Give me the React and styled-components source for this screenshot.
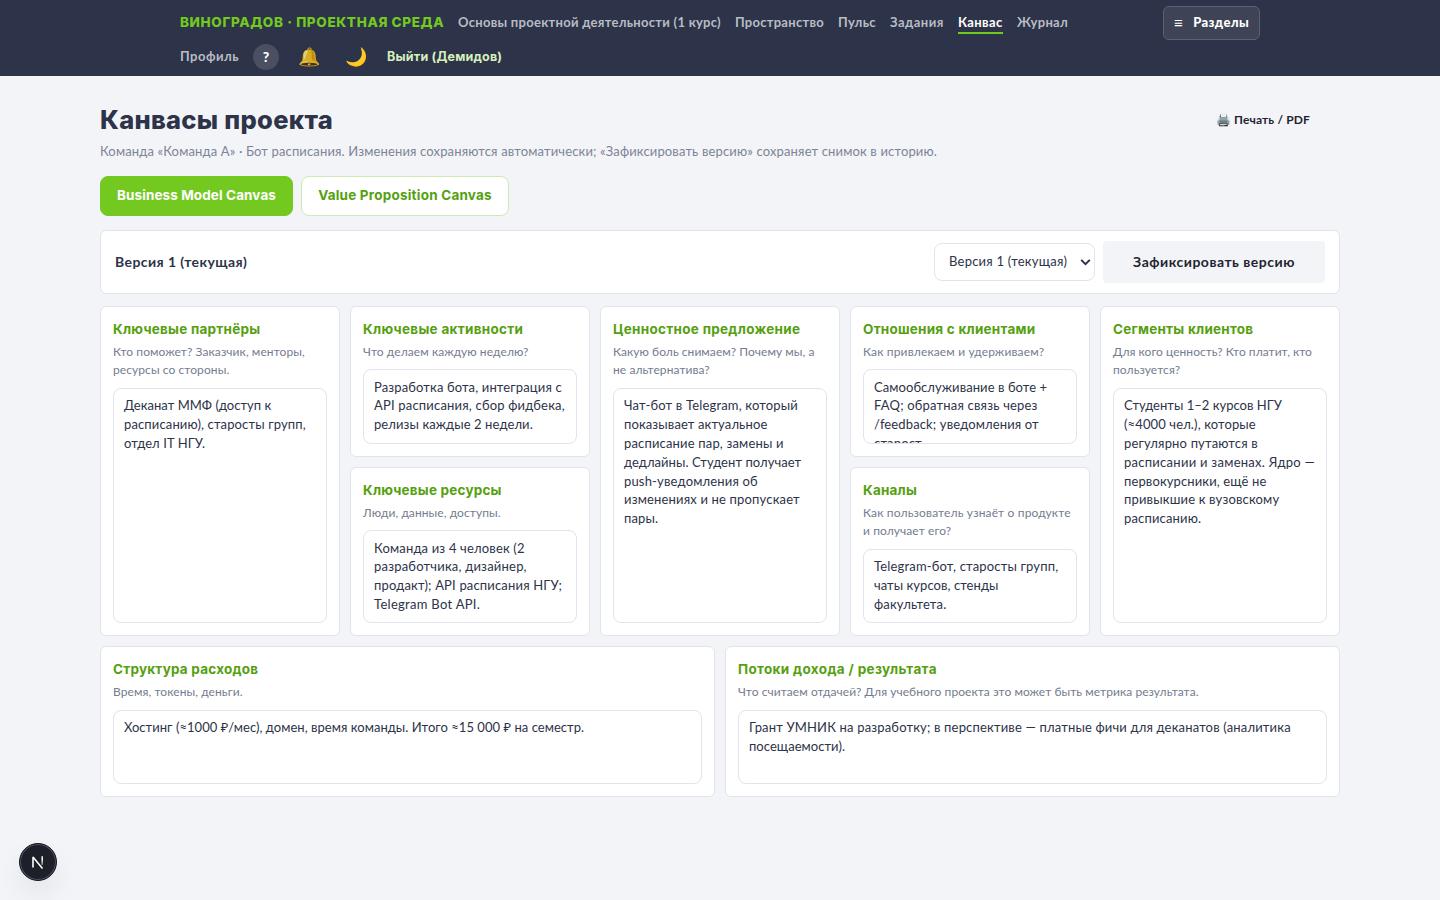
import React from "react";
import styled, { createGlobalStyle, css } from "styled-components";

const fonts = {
  body: '"Lato", "Noto Sans", sans-serif',
  display: '"Inter", "Roboto", sans-serif',
};

const GlobalStyle = createGlobalStyle`
  *, *::before, *::after { box-sizing: border-box; }
  body {
    margin: 0;
    min-height: 100vh;
    background: #f3f4f8;
    color: #2d3348;
    font-family: ${fonts.body};
    font-size: 14px;
    line-height: 1.55;
  }
  button { font: inherit; cursor: pointer; }
`;

const TopBar = styled.header`
  height: 76px;
  background: #2d3348;
  padding-top: 6px;
`;

const TopBarInner = styled.div`
  width: 1080px;
  margin: 0 auto;
  display: flex;
  justify-content: space-between;
  align-items: flex-start;
`;

const Nav = styled.nav`
  width: 960px;
  display: flex;
  flex-direction: column;
  gap: 4px;
`;

const NavRow = styled.div`
  height: ${(p) => p.$height}px;
  display: flex;
  align-items: center;
  gap: 14px;
  white-space: nowrap;
`;

const Brand = styled.a`
  width: 264px;
  padding-bottom: 2px;
  color: #73c91f;
  font: 800 13.5px/20px ${fonts.display};
  letter-spacing: ${(p) => p.$track}px;
`;

const NavLink = styled.a`
  color: ${(p) => (p.$active ? "#ffffff" : "#b9bcc5")};
  width: ${(p) => p.$width}px;
  font-size: 13px;
  font-weight: 700;
  line-height: 20px;
  letter-spacing: ${(p) => p.$track}px;
  border-bottom: 2px solid ${(p) => (p.$active ? "#73c91f" : "transparent")};
`;

const HelpButton = styled.button`
  width: 26px;
  height: 26px;
  padding: 0 0 1px;
  border: 0;
  border-radius: 50%;
  background: #4a4f62;
  color: #fff;
  font-size: 14px;
  font-weight: 900;
  line-height: 25px;
`;

const EmojiButton = styled.button`
  width: 33px;
  height: 26px;
  padding: 0 2px 2px 0;
  border: 0;
  background: none;
  display: flex;
  align-items: center;
  justify-content: center;
  font-size: 18px;
  line-height: 24px;
  filter: brightness(${(p) => p.$brightness || 1});
`;

const LogoutButton = styled.button`
  padding: 0;
  border: 0;
  background: none;
  color: #d5efbc;
  font: 700 12.5px/20px ${fonts.display};
  letter-spacing: ${(p) => p.$track}px;
`;

const SectionsButton = styled.button`
  width: 97px;
  height: 34px;
  padding: 0 10px 1px;
  display: flex;
  align-items: center;
  justify-content: space-between;
  border: 1px solid #5c6172;
  border-radius: 6px;
  background: #3e4356;
  color: #fff;
  font-size: 13px;
  font-weight: 900;
  letter-spacing: 0.35px;
`;

const MenuGlyph = styled.span`
  font: 700 15px/20px ${fonts.display};
  padding-top: 1px;
`;

const Page = styled.main`
  width: 1240px;
  margin: 0 auto;
  padding-top: 24px;
`;

const PageHead = styled.div`
  height: 41px;
  display: flex;
  align-items: center;
  justify-content: space-between;
`;

const Title = styled.h1`
  margin: 0;
  padding-bottom: 1px;
  font: 800 25.5px/40px ${fonts.display};
  letter-spacing: ${(p) => p.$track}px;
`;

const PlainButton = styled.button`
  height: 42px;
  padding: 0 30px;
  border: 0;
  border-radius: 4px;
  background: #f3f4f8;
  color: #1f2430;
  font-size: ${(p) => p.$size}px;
  font-weight: 700;
  white-space: nowrap;
  letter-spacing: ${(p) => p.$track}px;
  ${(p) => p.$width && css`width: ${p.$width}px; padding: 0; text-align: center;`}
`;

const Subtitle = styled.p`
  margin: 0;
  color: #7c8496;
  font-size: 13px;
  line-height: 20px;
  letter-spacing: 0.146px;
  white-space: nowrap;
`;

const Tabs = styled.div`
  margin-top: 15px;
  display: flex;
  gap: 8px;
`;

const Tab = styled.button`
  width: ${(p) => p.$width}px;
  height: 40px;
  padding: 0 0 2px;
  border: 1px solid ${(p) => (p.$active ? "#73c91f" : "#cdeab0")};
  border-radius: 8px;
  background: ${(p) => (p.$active ? "#73c91f" : "#ffffff")};
  color: ${(p) => (p.$active ? "#ffffff" : "#55a010")};
  font: 700 13.5px/20px ${fonts.display};
  letter-spacing: ${(p) => p.$track}px;
  white-space: nowrap;
`;

const panel = css`
  background: #fff;
  border: 1px solid #e1e4ec;
  border-radius: 6px;
`;

const VersionBar = styled.section`
  ${panel}
  height: 64px;
  margin-top: 14px;
  padding: 0 14px;
  display: flex;
  align-items: center;
  gap: 8px;
`;

const VersionName = styled.strong`
  flex: 1;
  padding-bottom: 1px;
  font-size: 14px;
  font-weight: 700;
  letter-spacing: 0.42px;
`;

const VersionSelect = styled.button`
  width: 161px;
  height: 38px;
  padding: 0 3px 1px 14px;
  display: flex;
  align-items: center;
  justify-content: space-between;
  border: 1px solid #e1e4ec;
  border-radius: 8px;
  background: #fff;
  color: #2d3348;
  font-size: 13px;
  letter-spacing: 0.23px;
  white-space: nowrap;
`;

const Grid = styled.div`
  margin-top: 12px;
  display: grid;
  grid-template-columns: repeat(10, 1fr);
  grid-template-rows: 151px 169.3px 150.7px;
  gap: 10px;
`;

const Card = styled.article`
  ${panel}
  grid-column: ${(p) => p.$column};
  grid-row: ${(p) => p.$row};
  min-width: 0;
  min-height: 0;
  padding: 12px;
  display: flex;
  flex-direction: column;
`;

const CardTitle = styled.h2`
  margin: 0 0 2px;
  color: #55a010;
  font: 700 13.5px/21.7px ${fonts.display};
  letter-spacing: ${(p) => p.$track}px;
  white-space: nowrap;
`;

const Hint = styled.p`
  margin: 0 0 8px;
  color: #747c8f;
  font-size: 12px;
  line-height: 18.6px;
  white-space: nowrap;
`;

const Field = styled.div`
  flex: 1;
  min-height: 0;
  padding: 7.3px 10px;
  overflow: hidden;
  border: 1px solid #e1e4ec;
  border-radius: 8px;
  background: #fff;
  font-size: 13px;
  line-height: 18.85px;
  white-space: nowrap;
`;

const Line = styled.span`
  display: block;
  letter-spacing: ${(p) => p.$track}px;
`;

const DevBadge = styled.div`
  position: fixed;
  left: 19px;
  bottom: 19px;
  width: 38px;
  height: 38px;
  display: grid;
  place-items: center;
  border-radius: 50%;
  background: #1d2029;
  border: 1px solid #16181f;
  box-shadow: inset 0 0 0 1px #4d5468, 0 14px 26px 2px rgba(0, 0, 0, 0.05);
`;

const navItems = [
  { label: "Основы проектной деятельности (1 курс)", width: 263, track: 0.28 },
  { label: "Пространство", width: 89, track: 0.27 },
  { label: "Пульс", width: 38, track: 0.38 },
  { label: "Задания", width: 54, track: 0.48 },
  { label: "Канвас", width: 45, track: 0.38, active: true },
  { label: "Журнал", width: 51, track: 0.32 },
];

const cards = [
  {
    title: "Ключевые партнёры", track: 0.24, column: "1 / 3", row: "1 / 3",
    hint: ["Кто поможет? Заказчик, менторы,", "ресурсы со стороны."],
    lines: [["Деканат ММФ (доступ к", 0.03], ["расписанию), старосты групп,", 0.14], ["отдел IT НГУ.", 0.08]],
  },
  {
    title: "Ключевые активности", track: 0.29, column: "3 / 5", row: "1",
    hint: ["Что делаем каждую неделю?"],
    lines: [["Разработка бота, интеграция с", 0.14], ["API расписания, сбор фидбека,", 0.19], ["релизы каждые 2 недели.", 0.09]],
  },
  {
    title: "Ключевые ресурсы", track: 0.2, column: "3 / 5", row: "2",
    hint: ["Люди, данные, доступы."],
    lines: ["Команда из 4 человек (2", ["разработчика, дизайнер,", 0.21], "продакт); API расписания НГУ;", ["Telegram Bot API.", 0.29]],
  },
  {
    title: "Ценностное предложение", track: 0.3, column: "5 / 7", row: "1 / 3",
    hint: [["Какую боль снимаем? Почему мы, а", 0.05], "не альтернатива?"],
    lines: [
      "Чат-бот в Telegram, который", ["показывает актуальное", 0.12], "расписание пар, замены и",
      ["дедлайны. Студент получает", 0.05], "push-уведомления об", "изменениях и не пропускает", "пары.",
    ],
  },
  {
    title: "Отношения с клиентами", track: 0.23, column: "7 / 9", row: "1",
    hint: [["Как привлекаем и удерживаем?", 0.15]],
    lines: [["Самообслуживание в боте +", 0.07], ["FAQ; обратная связь через", 0.19], ["/feedback; уведомления от", 0.13], "старост."],
  },
  {
    title: "Каналы", track: 0.2, column: "7 / 9", row: "2",
    hint: [["Как пользователь узнаёт о продукте", 0.15], "и получает его?"],
    lines: ["Telegram-бот, старосты групп,", ["чаты курсов, стенды", 0.06], "факультета."],
  },
  {
    title: "Сегменты клиентов", track: 0.24, column: "9 / 11", row: "1 / 3",
    hint: [["Для кого ценность? Кто платит, кто", 0.03], "пользуется?"],
    lines: [
      ["Студенты 1–2 курсов НГУ", 0.02], ["(≈4000 чел.), которые", 0.12], "регулярно путаются в",
      ["расписании и заменах. Ядро —", 0.27], ["первокурсники, ещё не", 0.12], "привыкшие к вузовскому", "расписанию.",
    ],
  },
  {
    title: "Структура расходов", track: 0.22, column: "1 / 6", row: "3",
    hint: ["Время, токены, деньги."],
    lines: [["Хостинг (≈1000 ₽/мес), домен, время команды. Итого ≈15 000 ₽ на семестр.", 0.04]],
  },
  {
    title: "Потоки дохода / результата", track: 0.35, column: "6 / 11", row: "3",
    hint: [["Что считаем отдачей? Для учебного проекта это может быть метрика результата.", 0.06]],
    lines: ["Грант УМНИК на разработку; в перспективе — платные фичи для деканатов (аналитика", ["посещаемости).", 0.05]],
  },
];

function Lines({ items, track }) {
  return items.map((item) => {
    const [text, own] = Array.isArray(item) ? item : [item, track];
    return <Line key={text} $track={own}>{text}</Line>;
  });
}

export default function App() {
  return (
    <>
      <GlobalStyle />
      <TopBar>
        <TopBarInner>
          <Nav>
            <NavRow $height={34}>
              <Brand $track={0.64}>ВИНОГРАДОВ · ПРОЕКТНАЯ СРЕДА</Brand>
              {navItems.map((item) => (
                <NavLink key={item.label} $width={item.width} $track={item.track} $active={item.active}>
                  {item.label}
                </NavLink>
              ))}
            </NavRow>
            <NavRow $height={26}>
              <NavLink $width={59} $track={0.5}>Профиль</NavLink>
              <HelpButton>?</HelpButton>
              <EmojiButton $brightness={0.85}>🔔</EmojiButton>
              <EmojiButton>🌙</EmojiButton>
              <LogoutButton $track={0.2}>Выйти (Демидов)</LogoutButton>
            </NavRow>
          </Nav>
          <SectionsButton>
            <MenuGlyph>≡</MenuGlyph>
            <span>Разделы</span>
          </SectionsButton>
        </TopBarInner>
      </TopBar>

      <Page>
        <PageHead>
          <Title $track={0.3}>Канвасы проекта</Title>
          <PlainButton $size={12} $track={0.15}>🖨️ Печать / PDF</PlainButton>
        </PageHead>
        <Subtitle>
          Команда «Команда А» · Бот расписания. Изменения сохраняются автоматически; «Зафиксировать версию» сохраняет снимок в историю.
        </Subtitle>
        <Tabs>
          <Tab $active $width={193} $track={0.1}>Business Model Canvas</Tab>
          <Tab $width={208} $track={0.22}>Value Proposition Canvas</Tab>
        </Tabs>

        <VersionBar>
          <VersionName>Версия 1 (текущая)</VersionName>
          <VersionSelect>
            Версия 1 (текущая)
            <svg width="11" height="8" viewBox="0 0 11 8" fill="none" stroke="#2d3348" strokeWidth="2">
              <path d="M1.2 1.9 5.5 6.2 9.8 1.9" />
            </svg>
          </VersionSelect>
          <PlainButton $size={14} $track={0.5} $width={222}>Зафиксировать версию</PlainButton>
        </VersionBar>

        <Grid>
          {cards.map((card) => (
            <Card key={card.title} $column={card.column} $row={card.row}>
              <CardTitle $track={card.track}>{card.title}</CardTitle>
              <Hint><Lines items={card.hint} track={0.08} /></Hint>
              <Field><Lines items={card.lines} track={0.17} /></Field>
            </Card>
          ))}
        </Grid>
      </Page>

      <DevBadge>
        <svg width="14" height="14" viewBox="0 0 14 14" fill="none">
          <defs>
            <linearGradient id="stem" x1="0" y1="1" x2="0" y2="13" gradientUnits="userSpaceOnUse">
              <stop offset="0.3" stopColor="#fff" />
              <stop offset="1" stopColor="#fff" stopOpacity="0.1" />
            </linearGradient>
          </defs>
          <path d="M2 12.5V2L11.5 13.5" stroke="#fff" strokeWidth="1.6" strokeLinejoin="bevel" />
          <path d="M11.2 1.3V10" stroke="url(#stem)" strokeWidth="1.5" />
        </svg>
      </DevBadge>
    </>
  );
}
